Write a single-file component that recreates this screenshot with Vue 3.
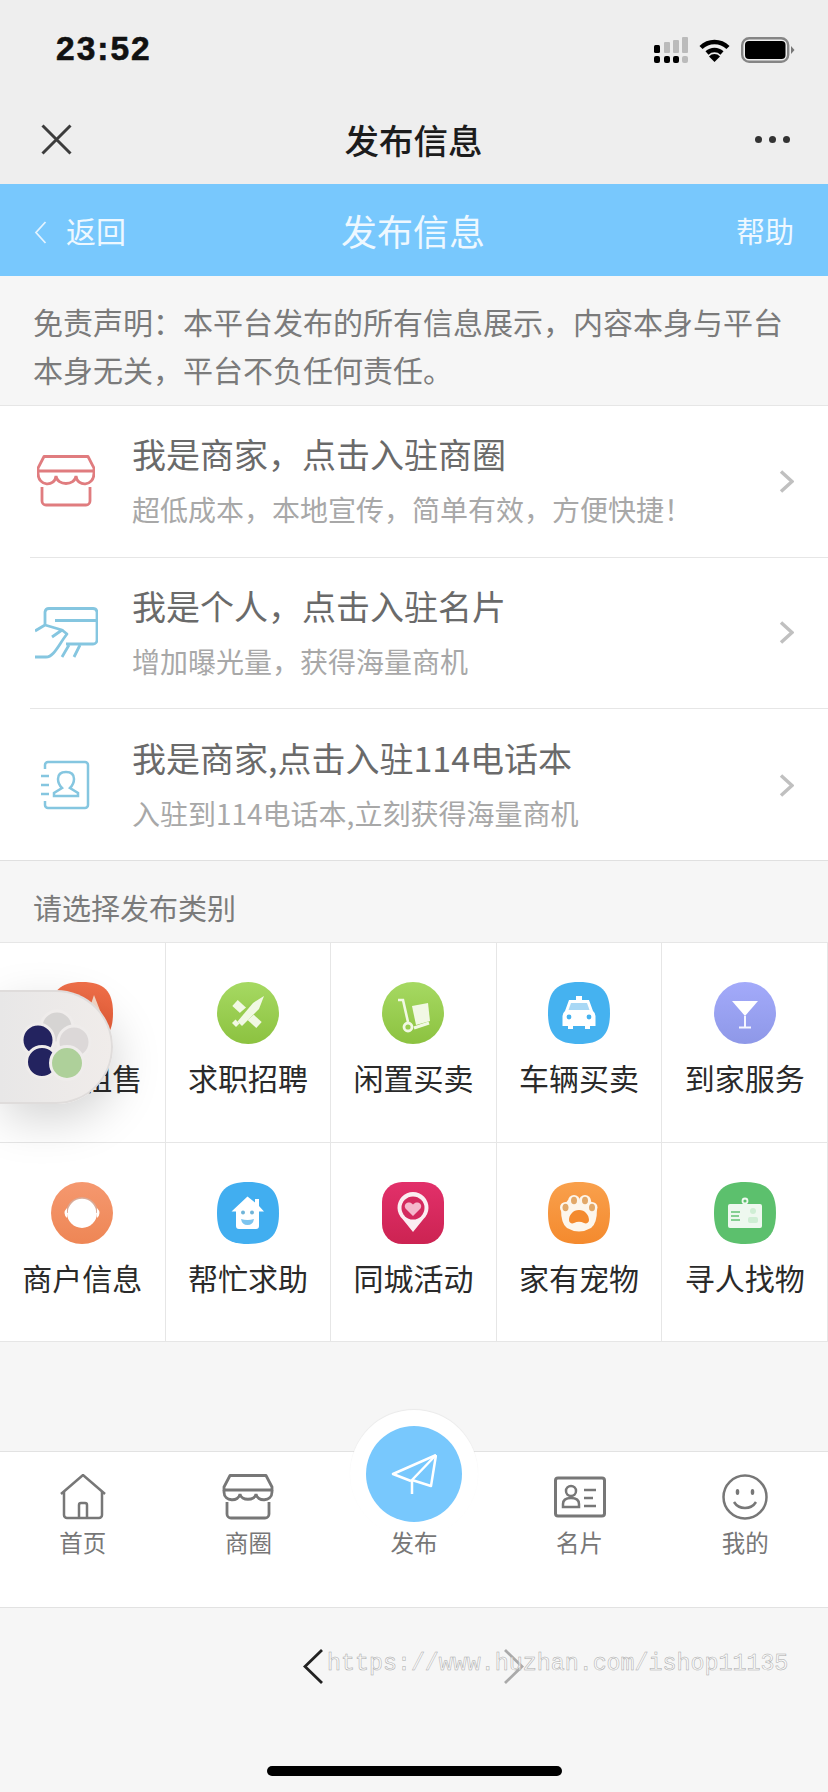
<script setup>
const sq = 'M31 0C53 0 62 9 62 31C62 53 53 62 31 62C9 62 0 53 0 31C0 9 9 0 31 0Z'
const grad = (id, a, b) => `<defs><linearGradient id="${id}" x1="0" y1="0" x2="0" y2="1"><stop offset="0" stop-color="${a}"/><stop offset="1" stop-color="${b}"/></linearGradient></defs>`
const rows = [
  { title: '我是商家，点击入驻商圈', sub: '超低成本，本地宣传，简单有效，方便快捷！', icon: 'store' },
  { title: '我是个人，点击入驻名片', sub: '增加曝光量，获得海量商机', icon: 'card' },
  { title: '我是商家,点击入驻114电话本', sub: '入驻到114电话本,立刻获得海量商机', icon: 'contact' }
]
const cats = [
  { name: '房屋租售', svg: `${grad('g1', '#f0704a', '#e85a34')}<path d="${sq}" fill="url(#g1)"/><path d="M37 31L43 13L50 31Z" fill="#f7d9c8"/>` },
  { name: '求职招聘', svg: `${grad('g2', '#a6d962', '#8cc240')}<circle cx="31" cy="31" r="31" fill="url(#g2)"/><path d="M18 21L42 43" stroke="#f1f8e4" stroke-width="8" fill="none"/><path d="M18 42L40 23" stroke="#98cc50" stroke-width="10.500" fill="none"/><path d="M15 41L19 45L22.500 41.500L18.500 37.500Z" fill="#f1f8e4"/><path d="M20.500 39.500L25 44L42 27L47 14L36 21Z" fill="#f1f8e4"/>` },
  { name: '闲置买卖', svg: `${grad('g3', '#a6d962', '#8cc240')}<circle cx="31" cy="31" r="31" fill="url(#g3)"/><path d="M30 24L46 21L48 39L34 43Z" fill="#f1f8e4"/><path d="M16 18H21L26 40" fill="none" stroke="#f1f8e4" stroke-width="2.600"/><path d="M32 46L47 41" stroke="#f1f8e4" stroke-width="3" fill="none"/><circle cx="26" cy="45" r="4" fill="#98cc50" stroke="#f1f8e4" stroke-width="2.800"/>` },
  { name: '车辆买卖', svg: `<path d="${sq}" fill="#45b2f0"/><path d="M28 14H34V18H28Z" fill="#fff"/><path d="M21 18H41L45 29Q47.500 31 47.500 34V44H42V47H37V44H25V47H20V44H14.500V34Q14.500 31 17 29Z" fill="#fff"/><path d="M23 21H39L41.500 28H20.500Z" fill="#a9d8f5"/><circle cx="21" cy="35" r="2.400" fill="#45b2f0"/><circle cx="41" cy="35" r="2.400" fill="#45b2f0"/>` },
  { name: '到家服务', svg: `${grad('g5', '#a3aafa', '#8e98e8')}<circle cx="31" cy="31" r="31" fill="url(#g5)"/><path d="M18 19H44L31 34Z" fill="#fff"/><path d="M31 34V45M25 45.500H37" stroke="#f4f5ff" stroke-width="2" fill="none"/>` },
  { name: '商户信息', svg: `${grad('g6', '#f5986f', '#ee8655')}<circle cx="31" cy="31" r="31" fill="url(#g6)"/><circle cx="31" cy="31" r="15" fill="#fff"/><path d="M16 31A15 15 0 0 1 46 31" fill="none" stroke="#d9ab98" stroke-width="1.500"/><path d="M16 26Q11 31 16 36Z" fill="#fff"/><path d="M46 26Q51 31 46 36Z" fill="#fff"/>` },
  { name: '帮忙求助', svg: `<path d="${sq}" fill="#41aef0"/><path d="M30.500 14.500L38 20.500V17H42V24L47 29.500H42V44Q42 47 39 47H22Q19 47 19 44V29.500H14.500Z" fill="#fff"/><circle cx="26" cy="30.500" r="2" fill="#6fb4d8"/><circle cx="35" cy="30.500" r="2" fill="#6fb4d8"/><path d="M24 37Q30.500 39 37 37Q36 43 30.500 43Q25 43 24 37Z" fill="#7cc4ef"/>` },
  { name: '同城活动', svg: `${grad('g8', '#e2306a', '#cc2352')}<rect width="62" height="62" rx="20" fill="url(#g8)"/><path d="M31 50L20.500 37A15.500 15.500 0 1 1 41.500 37Z" fill="#fbeef2"/><circle cx="31" cy="26" r="11.500" fill="#d42a5e"/><path d="M31 34L23.500 26.500C20.500 21.500 27.500 18 31 22.500C34.500 18 41.500 21.500 38.500 26.500Z" fill="#f5b8cc"/>` },
  { name: '家有宠物', svg: `${grad('g9', '#f9a04c', '#f48a2e')}<path d="${sq}" fill="url(#g9)"/><g fill="#fdf6ec"><circle cx="17.500" cy="25.500" r="5.500"/><circle cx="26" cy="19" r="6"/><circle cx="37" cy="19" r="6"/><circle cx="44" cy="25.500" r="5.500"/><path d="M13 27L20 18H42L49 27Q49 42 43 46Q31 53 19 46Q13 42 13 27Z"/></g><g fill="#e2a868"><ellipse cx="17.500" cy="25.500" rx="3" ry="3.800"/><ellipse cx="26" cy="18.500" rx="3" ry="3.800"/><ellipse cx="37" cy="18.500" rx="3" ry="3.800"/><ellipse cx="44" cy="25.500" rx="3" ry="3.800"/></g><path d="M31 28C37 28 41 33 41 38C41 41 38 42 36 41Q31 38.500 26 41C24 42 21 41 21 38C21 33 25 28 31 28Z" fill="#f48a2e"/>` },
  { name: '寻人找物', svg: `<path d="${sq}" fill="#5cc06d"/><rect x="14" y="22" width="34" height="24" rx="2" fill="#eef8ef"/><circle cx="31" cy="19" r="2.500" fill="none" stroke="#eef8ef" stroke-width="1.800"/><path d="M17 30H26M17 34H25M17 38H26" stroke="#86cf92" stroke-width="1.800"/><circle cx="39" cy="29" r="3" fill="#cfeed4"/><rect x="34" y="35" width="10" height="6" rx="2" fill="#cfeed4"/>` }
]
</script>

<template>
  <div class="page">
    <div class="status">
      <span class="time">23:52</span>
      <div class="status-icons">
        <svg width="34" height="26" viewBox="0 0 34 26">
          <rect x="0" y="8" width="6" height="8" rx="1.500" fill="#000"/>
          <rect x="10" y="5" width="6" height="11" rx="1" fill="#bbb"/>
          <rect x="19" y="3" width="6" height="13" rx="1" fill="#bbb"/>
          <rect x="28" y="0" width="6" height="16" rx="1" fill="#bbb"/>
          <rect x="0" y="19" width="6" height="7" rx="2" fill="#000"/>
          <rect x="10" y="19" width="6" height="7" rx="2" fill="#000"/>
          <rect x="19" y="19" width="6" height="7" rx="2" fill="#000"/>
          <rect x="28" y="19" width="6" height="7" rx="2" fill="#bbb"/>
        </svg>
        <svg width="31" height="24" viewBox="0 0 31 24">
          <path d="M2 9.500A19.500 19.500 0 0 1 29 9.500" fill="none" stroke="#000" stroke-width="4.500"/>
          <path d="M8 15A11 11 0 0 1 23 15" fill="none" stroke="#000" stroke-width="4.500"/>
          <path d="M15.500 24L10 18.500A7.500 7.500 0 0 1 21 18.500Z" fill="#000"/>
        </svg>
        <svg width="54" height="26" viewBox="0 0 54 26">
          <rect x="1.200" y="1.200" width="46" height="23.600" rx="7" fill="none" stroke="#858585" stroke-width="2.400"/>
          <rect x="4" y="4" width="40.500" height="18" rx="4" fill="#000"/>
          <path d="M50 9L53.500 13L50 17Z" fill="#777"/>
        </svg>
      </div>
    </div>

    <div class="nav">
      <svg class="close" width="31" height="31" viewBox="0 0 31 31"><path d="M1.500 1.500L29.500 29.500M29.500 1.500L1.500 29.500" stroke="#3c3c3c" stroke-width="3" fill="none"/></svg>
      <span class="nav-title">发布信息</span>
      <div class="dots"><i></i><i></i><i></i></div>
    </div>

    <div class="bluebar">
      <div class="back">
        <svg width="13" height="23" viewBox="0 0 13 23"><path d="M11.500 1L2 11.500L11.500 22" fill="none" stroke="#e3f3ff" stroke-width="1.800"/></svg>
        <span>返回</span>
      </div>
      <span class="blue-title">发布信息</span>
      <span class="help">帮助</span>
    </div>

    <div class="notice">免责声明：本平台发布的所有信息展示，内容本身与平台<br>本身无关，平台不负任何责任。</div>

    <div class="list">
      <div v-for="r in rows" :key="r.title" class="row">
        <div class="row-icon">
          <svg v-if="r.icon === 'store'" class="ic-store" width="58" height="52" viewBox="0 0 58 52" fill="none" stroke="#e07c7f" stroke-width="2.800">
            <path d="M7 1.500H51L57 13V16H1V13Z" stroke-linejoin="round"/>
            <path d="M1 16V18C1 32 18 32 19 21C20 31 38 31 39 21C40 32 57 32 57 18V16"/>
            <path d="M5 32V46A4 4 0 0 0 9 50H49A4 4 0 0 0 53 46V32"/>
          </svg>
          <svg v-else-if="r.icon === 'card'" class="ic-card" width="63" height="52" viewBox="0 0 63 52" fill="none" stroke="#85c6e0" stroke-width="2.800" stroke-linejoin="round">
            <path d="M10 17V5A4 4 0 0 1 14 1.500H58A4 4 0 0 1 62 5V33A4 4 0 0 1 58 37H31"/>
            <path d="M20 13.500H62"/>
            <path d="M0 24L10 18L27 23L17 30"/>
            <path d="M0 50H11C19 50 24 37 32 27L27 23"/>
            <path d="M34 38L27 50M45 38L39 50"/>
          </svg>
          <svg v-else class="ic-contact" width="50" height="50" viewBox="0 0 50 50" fill="none" stroke="#85c6e0" stroke-width="2.500">
            <path d="M4 9V5A3 3 0 0 1 7 2H44A3 3 0 0 1 47 5V45A3 3 0 0 1 44 48H7A3 3 0 0 1 4 45V41"/>
            <path d="M0 16H8M0 25H8M0 34H8"/>
            <path d="M13 36V33L21 28C18 25 17 22 17 19C17 14 20 12 25 12C30 12 33 14 33 19C33 22 32 25 29 28L37 33V36Z"/>
          </svg>
        </div>
        <div class="row-text">
          <div class="row-title">{{ r.title }}</div>
          <div class="row-sub">{{ r.sub }}</div>
        </div>
        <svg class="arrow" width="15" height="23" viewBox="0 0 15 23"><path d="M2 1.500L13 11.500L2 21.500" fill="none" stroke="#c0c0c0" stroke-width="3.500"/></svg>
      </div>
    </div>

    <div class="section">请选择发布类别</div>

    <div class="grid">
      <div v-for="c in cats" :key="c.name" class="cell">
        <svg class="cat-icon" width="62" height="62" viewBox="0 0 62 62" v-html="c.svg"></svg>
        <span class="cat-name">{{ c.name }}</span>
      </div>
    </div>

    <div class="float">
      <svg width="80" height="80" viewBox="0 0 80 80">
        <g stroke="#efeceb" stroke-width="3">
          <circle cx="39" cy="20" r="16" fill="#d6d4d3"/>
          <circle cx="56" cy="35" r="16" fill="#dcd8d8"/>
          <circle cx="20" cy="33" r="16" fill="#23235f"/>
          <circle cx="24" cy="55" r="15.500" fill="#23235f"/>
          <circle cx="49" cy="56" r="16.500" fill="#aed09a"/>
        </g>
      </svg>
    </div>

    <div class="spacer"></div>

    <div class="tabbar">
      <div class="tab">
        <svg width="46" height="46" viewBox="0 0 46 46" fill="none" stroke="#777" stroke-width="2.500">
          <path d="M1 20L23 1L45 20"/>
          <path d="M4 18V41A3 3 0 0 0 7 44H39A3 3 0 0 0 42 41V18"/>
          <path d="M19 44V31A2 2 0 0 1 21 29H25A2 2 0 0 1 27 31V44"/>
        </svg>
        <span>首页</span>
      </div>
      <div class="tab">
        <svg width="52" height="46" viewBox="0 0 52 46" fill="none" stroke="#777" stroke-width="2.800">
          <path d="M8 1.500H44L50 13V16H2V13Z" stroke-linejoin="round"/>
          <path d="M2 16V18C2 28 17 28 18 20C19 27 33 27 34 20C35 28 50 28 50 18V16"/>
          <path d="M5 28V40A4 4 0 0 0 9 44H43A4 4 0 0 0 47 40V28"/>
        </svg>
        <span>商圈</span>
      </div>
      <div class="tab center">
        <div class="fab">
          <div class="fab-in">
            <svg width="46" height="41" viewBox="0 0 46 41" fill="none" stroke="#fff" stroke-width="2.500" stroke-linejoin="round">
              <path d="M45 1L2 20L20 27"/>
              <path d="M45 1L40 32L21 26"/>
              <path d="M45 1L21 26V40"/>
            </svg>
          </div>
        </div>
        <div class="tab-gap"></div>
        <span>发布</span>
      </div>
      <div class="tab">
        <svg width="52" height="46" viewBox="0 0 52 46" fill="none" stroke="#777" stroke-width="2.500">
          <rect x="1.500" y="4" width="49" height="38" rx="2.500" stroke-width="3"/>
          <circle cx="17" cy="17" r="5"/>
          <path d="M9 33V30C9 26 12 24 17 24C22 24 25 26 25 30V33Z"/>
          <path d="M30 16H42M30 24H39M30 32H42"/>
        </svg>
        <span>名片</span>
      </div>
      <div class="tab">
        <svg width="46" height="46" viewBox="0 0 46 46" fill="none" stroke="#777" stroke-width="2.500">
          <circle cx="23" cy="23" r="21.500"/>
          <path d="M12 28C17 36 29 36 34 28"/>
          <ellipse cx="15.500" cy="18" rx="1.800" ry="3" fill="#777" stroke="none"/>
          <ellipse cx="30.500" cy="18" rx="1.800" ry="3" fill="#777" stroke="none"/>
        </svg>
        <span>我的</span>
      </div>
    </div>

    <div class="browser">
      <svg class="prev" width="20" height="35" viewBox="0 0 20 35"><path d="M19 1L2 17.500L19 34" fill="none" stroke="#222" stroke-width="2.800"/></svg>
      <svg class="next" width="20" height="35" viewBox="0 0 20 35"><path d="M1 1L18 17.500L1 34" fill="none" stroke="#aaa" stroke-width="2.800"/></svg>
      <span class="mark">https://www.huzhan.com/ishop11135</span>
      <div class="home-bar"></div>
    </div>
  </div>
</template>

<style>
html, body { margin: 0; padding: 0; background: #f6f6f6; }
</style>

<style scoped>
.page {
  position: relative;
  display: flex;
  flex-direction: column;
  width: 828px;
  height: 1792px;
  overflow: hidden;
  background: #f6f6f6;
  font-family: "Noto Sans CJK SC", "Liberation Sans", sans-serif;
}
.status {
  flex: none;
  height: 94px;
  box-sizing: border-box;
  padding: 0 33px 0 56px;
  display: flex;
  align-items: flex-start;
  justify-content: space-between;
  background: #eeeeee;
}
.time {
  margin-top: 29px;
  font: 700 33.500px/40px "Liberation Sans", sans-serif;
  letter-spacing: 2px;
  -webkit-text-stroke: 0.6px #111;
  color: #111;
}
.status-icons {
  margin-top: 37px;
  display: flex;
  align-items: center;
  gap: 11px;
}
.nav {
  flex: none;
  height: 90px;
  box-sizing: border-box;
  padding: 0 38px 0 41px;
  display: grid;
  grid-template-columns: 1fr auto 1fr;
  align-items: center;
  background: #eeeeee;
}
.nav-title {
  font-size: 34.500px;
  font-weight: 500;
  line-height: 50px;
  color: #1c1c1c;
  margin-left: -4px;
}
.dots { display: flex; gap: 7px; justify-content: flex-end; }
.dots i {
  width: 7px;
  height: 7px;
  border-radius: 50%;
  background: #333;
}
.bluebar {
  flex: none;
  height: 92px;
  box-sizing: border-box;
  padding: 0 34px;
  display: grid;
  grid-template-columns: 1fr auto 1fr;
  align-items: center;
  background: #78c8fd;
  color: #eef8ff;
}
.back {
  display: flex;
  align-items: center;
  gap: 19px;
  font-size: 30px;
  line-height: 44px;
}
.back svg { margin-top: 4px; }
.blue-title {
  font-size: 36px;
  line-height: 50px;
  margin-left: -2px;
}
.help { font-size: 29px; line-height: 44px; justify-self: end; }
.notice {
  flex: none;
  height: 129px;
  box-sizing: border-box;
  padding: 21px 30px 0 33px;
  font-size: 30px;
  line-height: 48px;
  color: #7b7b7b;
  white-space: nowrap;
}
.list {
  flex: none;
  box-sizing: border-box;
  height: 456px;
  background: #fff;
  border-top: 1px solid #e6e6e6;
  border-bottom: 1px solid #e0e0e0;
}
.row {
  position: relative;
  height: 151.670px;
  display: flex;
  align-items: center;
  margin-left: 30px;
  padding-right: 34px;
  box-sizing: border-box;
  border-bottom: 1px solid #e6e6e6;
}
.row:last-child { border-bottom: 0; }
.row-icon {
  flex: none;
  width: 102px;
  display: flex;
  justify-content: flex-start;
}
.ic-store { margin-left: 7px; }
.ic-card { margin-left: 5px; }
.ic-contact { margin-left: 11px; }
.row-text { flex: 1; min-width: 0; padding-bottom: 2px; }
.row-title {
  font-size: 34px;
  line-height: 46px;
  color: #6a6a6a;
}
.row-sub {
  margin-top: 12px;
  font-size: 28px;
  line-height: 40px;
  color: #a8a8a8;
}
.arrow { flex: none; }
.section {
  flex: none;
  height: 81px;
  box-sizing: border-box;
  padding: 25px 33px 0;
  font-size: 29px;
  line-height: 42px;
  color: #7b7b7b;
}
.grid {
  flex: none;
  box-sizing: border-box;
  height: 400px;
  display: grid;
  grid-template-columns: repeat(5, 1fr);
  grid-auto-rows: 199.500px;
  background: #fff;
  border-top: 1px solid #e6e6e6;
}
.cell {
  box-sizing: border-box;
  padding-top: 39px;
  display: flex;
  flex-direction: column;
  align-items: center;
  border-right: 1px solid #e6e6e6;
  border-bottom: 1px solid #e6e6e6;
}
.cat-icon { display: block; flex: none; }
.cat-name {
  margin-top: 12px;
  font-size: 30px;
  line-height: 42px;
  color: #2a2a2a;
  white-space: nowrap;
}
.float {
  position: absolute;
  left: 0;
  top: 990px;
  width: 113px;
  height: 114px;
  box-sizing: border-box;
  display: flex;
  align-items: center;
  padding-left: 18px;
  background: linear-gradient(90deg, #e8e7e7, #f0ecea);
  border: 2px solid #dfdcdb;
  border-left: 0;
  border-radius: 0 57px 57px 0;
  box-shadow: 4px 16px 46px rgba(0, 0, 0, 0.17);
}
.spacer { flex: 1; }
.tabbar {
  flex: none;
  position: relative;
  height: 157px;
  box-sizing: border-box;
  display: grid;
  grid-template-columns: repeat(5, 1fr);
  background: #fff;
  border-top: 1px solid #e2e2e2;
  border-bottom: 1px solid #e2e2e2;
}
.tab {
  position: relative;
  padding-top: 22px;
  display: flex;
  flex-direction: column;
  align-items: center;
  font-size: 23.500px;
  line-height: 30px;
  color: #777;
}
.tab > svg { display: block; height: 46px; flex: none; }
.tab > span { margin-top: 7px; position: relative; }
.tab-gap { height: 46px; flex: none; }
.fab {
  position: absolute;
  left: 50%;
  top: -42px;
  width: 128px;
  height: 128px;
  margin-left: -64px;
  box-sizing: border-box;
  border-radius: 50%;
  background: #fff;
  box-shadow: 0 -1px 1px rgba(0, 0, 0, 0.05);
  display: flex;
  align-items: center;
  justify-content: center;
}
.fab-in {
  width: 96px;
  height: 96px;
  border-radius: 50%;
  background: #78c8fd;
  display: flex;
  align-items: center;
  justify-content: center;
}
.browser {
  flex: none;
  position: relative;
  height: 184px;
}
.prev { position: absolute; left: 303px; top: 41px; }
.next { position: absolute; left: 504px; top: 41px; }
.mark {
  position: absolute;
  left: 327px;
  top: 41px;
  font: 400 23.300px/30px "Liberation Mono", monospace;
  color: rgba(255, 255, 255, 0.6);
  -webkit-text-stroke: 0.5px #a8a8a8;
  white-space: nowrap;
}
.home-bar {
  position: absolute;
  left: 267px;
  top: 158px;
  width: 295px;
  height: 10px;
  border-radius: 5px;
  background: #000;
}
</style>
